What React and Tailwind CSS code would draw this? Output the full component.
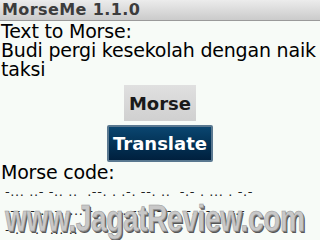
export default function App() {
  const font = { fontFamily: '"DejaVu Sans", sans-serif' };
  return (
    <div className="relative w-[320px] h-[240px] overflow-hidden bg-[#f7fbf7] text-black" style={font}>
      <div className="h-[21px] bg-gradient-to-b from-[#ececec] to-[#cbcbcb] border-b border-[#9a9a9a] flex items-center px-[2px]">
        <span className="text-[16px] font-bold leading-none text-[#3c3c3c] tracking-[0.4px]">MorseMe 1.1.0</span>
      </div>
      <div className="px-[1px] pt-[1px] text-[19px] leading-[19px] tracking-[-0.2px]">
        <div>Text to Morse:</div>
        <div>Budi pergi kesekolah dengan naik taksi</div>
      </div>
      <div className="flex flex-col items-center mt-[6px] gap-[4px]">
        <div className="w-[72px] h-[36px] bg-gradient-to-b from-[#e0e0e0] to-[#d0d0d0] flex items-center justify-center text-[18px] font-bold text-[#1a1a1a]">Morse</div>
        <div className="w-[106px] h-[37px] rounded-[2px] border-2 border-[#5a7890] bg-gradient-to-b from-[#0b4670] to-[#00203e] flex items-center justify-center text-[18px] font-bold text-white">Translate</div>
      </div>
      <div className="px-[1px] text-[19px] leading-[19px] tracking-[-0.2px] mt-[1px]">Morse code:</div>
      <div className="px-[5px] text-[13px] leading-[19px] text-[#222] tracking-[0.6px]">
        <div className="whitespace-nowrap">-... ..- -.. ..&nbsp; .--. . .-. --. ..&nbsp; -.- . ... . -.-</div>
        <div className="whitespace-nowrap">--- .-.. .- .... -.. . -. --. .- -.&nbsp; -. .- .. -.-</div>
        <div className="whitespace-nowrap">- .- -.- ... ..</div>
      </div>
      <div
        className="absolute left-[5px] top-[201px] text-[36px] font-bold leading-none tracking-[-0.5px] text-[#c8c8c8] whitespace-nowrap origin-left scale-x-[0.78]"
        style={{ fontFamily: '"Liberation Sans", sans-serif', textShadow: '1px 1px 0 #777, 2px 2px 0 #555', WebkitTextStroke: '0.5px #999' }}
      >
        www.JagatReview.com
      </div>
    </div>
  );
}
